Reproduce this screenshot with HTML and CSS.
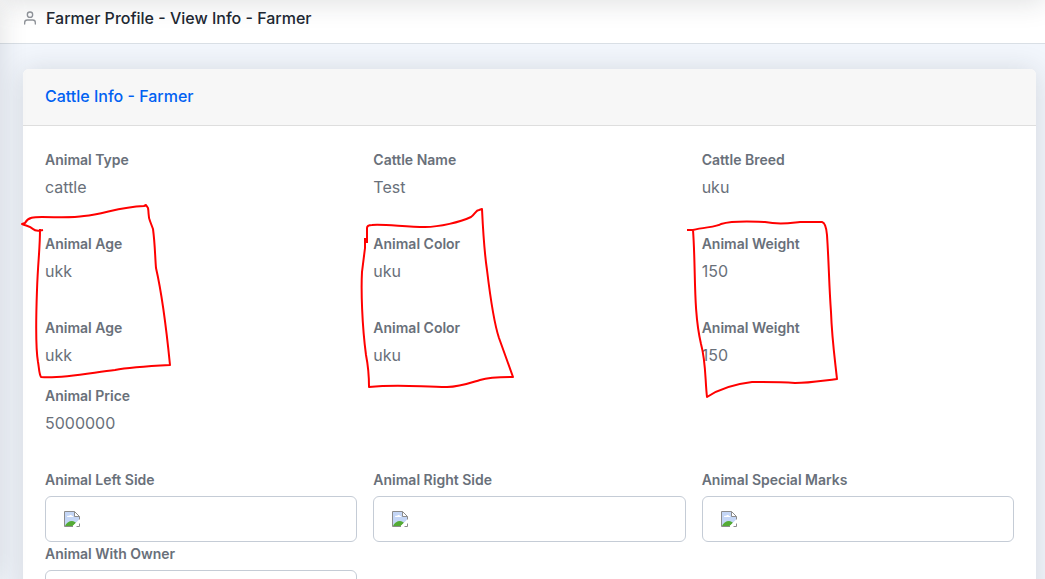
FILE: index.html
```html
<!DOCTYPE html>
<html lang="en">
<head>
<meta charset="utf-8">
<meta name="viewport" content="width=device-width, initial-scale=1">
<title>Farmer Profile - View Info - Farmer</title>
<link rel="stylesheet" href="styles.css">
</head>
<body>
<svg class="defs" aria-hidden="true">
  <symbol id="missing" viewBox="0 0 16 16">
    <path d="M.5.5h10l5 5v10H.5z" fill="#fff"/>
    <path d="M1 1h10v4h4v4l-6 6H1z" fill="#c4d6f6"/>
    <path d="M3 6c0-1 1-1.500 2-1 .5-1.500 3-1.500 3 0 1 0 1.500.5 1.500 1z" fill="#fff"/>
    <path d="M1 15c1-3 4-5 7-5 2 0 3 1 4 2l-3 3z" fill="#54ab35"/>
    <path d="M8 15.500l7.500-7v3l-4 4z" fill="#fff"/>
    <path d="M10.500.5H.5v15H9M10.500.5l5 5v3M10.500.5v5h5M12.500 15.500h3v-3" fill="none" stroke="#8c8c8c"/>
  </symbol>
</svg>
<div class="page">
  <header class="page-header">
    <svg class="user-icon" viewBox="0 0 24 24" aria-hidden="true"><path d="M20 21v-2a4 4 0 0 0-4-4H8a4 4 0 0 0-4 4v2"/><circle cx="12" cy="7" r="4"/></svg>
    <h1>Farmer Profile - View Info - Farmer</h1>
  </header>
  <main>
    <section class="card">
      <h2 class="card-header">Cattle Info - Farmer</h2>
      <div class="card-body">
        <dl class="row">
          <div><dt>Animal Type</dt><dd>cattle</dd></div>
          <div><dt>Cattle Name</dt><dd>Test</dd></div>
          <div><dt>Cattle Breed</dt><dd>uku</dd></div>
        </dl>
        <dl class="row">
          <div><dt>Animal Age</dt><dd>ukk</dd></div>
          <div><dt>Animal Color</dt><dd>uku</dd></div>
          <div><dt>Animal Weight</dt><dd>150</dd></div>
        </dl>
        <dl class="row row-tight">
          <div><dt>Animal Age</dt><dd>ukk</dd></div>
          <div><dt>Animal Color</dt><dd>uku</dd></div>
          <div><dt>Animal Weight</dt><dd>150</dd></div>
        </dl>
        <dl class="row">
          <div><dt>Animal Price</dt><dd>5000000</dd></div>
        </dl>
        <dl class="row row-photos">
          <div><dt>Animal Left Side</dt><dd class="photo"><svg><use href="#missing"/></svg></dd></div>
          <div><dt>Animal Right Side</dt><dd class="photo"><svg><use href="#missing"/></svg></dd></div>
          <div><dt>Animal Special Marks</dt><dd class="photo"><svg><use href="#missing"/></svg></dd></div>
          <div><dt>Animal With Owner</dt><dd class="photo"><svg><use href="#missing"/></svg></dd></div>
        </dl>
      </div>
    </section>
  </main>
  <svg class="marks" width="1045" height="579" viewBox="0 0 1045 579" aria-hidden="true">
    <path d="M43 230C39 231 35 231 33 229C30 226 27 226 22 224L25 223C28 217 34 217 42 217C58 217 72 218 84 216C105 214 118 207 144 206L146 205L148 208C149 213 148 217 150 221L153 229C155 244 155 256 156 268C162 294 167 335 170 365C150 366 130 367 115 370C90 373 60 379 41 377C39 374 39 367 38 362C35 345 36 318 37 290C38 260 40 250 40 229"/>
    <path d="M367 243V228Q367 225 372 225C385 224 405 227 425 227C440 227 460 222 471 217C475 214 476 210 479 210L482 209C483 230 484 250 487 270C490 295 493 320 499 338L513 377C500 377 490 377 480 380C470 383 460 387 447 387C420 387 400 384 369 387C369 375 368 365 366 355C362 325 361 290 362 272L365 248V238"/>
    <path d="M687 230L693 230C705 227 717 227 721 224C735 220 757 222 765 222C780 225 790 223 800 222H822Q826 223 827 235C829 265 829 285 831 312C832 340 835 360 837 379C820 381 810 383 795 383C780 382 765 382 752 382C735 384 719 389 707 397C705 380 706 362 701 344C693 310 696 270 693 230"/>
  </svg>
</div>
</body>
</html>
```
FILE: styles.css
```css
* { box-sizing: border-box; }
body {
  margin: 0;
  font-family: Inter, "Open Sans", sans-serif;
  font-size: 16px;
  line-height: 24px;
  color: #69707a;
  background: #f2f6fc;
}
.defs { position: absolute; width: 0; height: 0; }
.page { position: relative; height: 100vh; overflow: hidden; }
.page::before,
.page::after {
  content: "";
  position: absolute;
  z-index: 2;
  box-shadow: 0 2px 28px rgba(33, 40, 50, 0.15);
}
.page::before { inset: 0 100% 0 -40px; }
.page::after { inset: -40px 0 100% 0; }
.page-header {
  display: flex;
  align-items: center;
  gap: 8px;
  padding: 6px 22px 13px;
  background: #fff;
  border-bottom: 1px solid #d9dfe5;
}
.user-icon {
  width: 16px;
  height: 16px;
  fill: none;
  stroke: #91959b;
  stroke-width: 2;
  stroke-linecap: round;
  stroke-linejoin: round;
}
h1, h2 { margin: 0; font-size: 16px; font-weight: 500; line-height: 24px; }
h1 { color: #212832; }
main { padding: 25px 9px 24px 23px; }
.card {
  background: #fff;
  border-radius: 6px;
  box-shadow: 0 2px 28px rgba(33, 40, 50, 0.15);
}
.card-header {
  padding: 15px 22px 17px;
  color: #0061f2;
  background: #f7f7f7;
  border-bottom: 1px solid #dedede;
  border-radius: 6px 6px 0 0;
}
.card-body { padding: 22px; }
.row {
  display: grid;
  grid-template-columns: repeat(3, 1fr);
  column-gap: 16px;
  margin: 0 0 34px;
}
.row-tight { margin-bottom: 18px; }
.row-photos { margin-bottom: 0; }
dt { margin-bottom: 4px; font-size: 14px; font-weight: 600; }
dd { margin: 0; line-height: 22px; }
.photo {
  display: flex;
  align-items: center;
  height: 46px;
  padding: 0 18px;
  border: 1px solid #c5ccd6;
  border-radius: 6px;
}
.photo svg { width: 16px; height: 16px; }
.marks {
  position: absolute;
  top: 0;
  left: 0;
  z-index: 3;
  fill: none;
  stroke: #f00;
  stroke-width: 2;
  stroke-linejoin: round;
  pointer-events: none;
}
```
